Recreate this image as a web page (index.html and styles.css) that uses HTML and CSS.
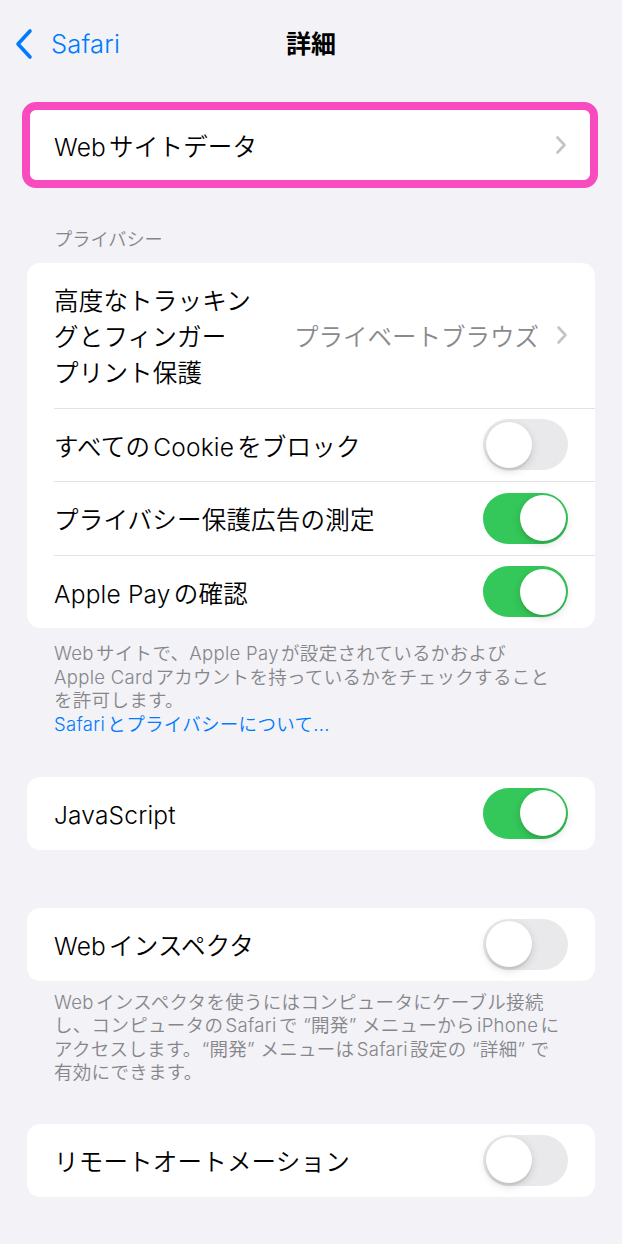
FILE: index.html
```html
<!DOCTYPE html>
<html lang="ja">
<head>
<meta charset="utf-8">
<title>詳細</title>
<link rel="stylesheet" href="styles.css">
</head>
<body>
<div class="screen">
  <header class="nav">
    <div class="nav-left">
      <svg class="back-icon" viewBox="0 0 20 32" width="20" height="32" aria-hidden="true"><path d="M16 3 L4 16 L16 29" fill="none" stroke="#007aff" stroke-width="3.6" stroke-linecap="round" stroke-linejoin="round"/></svg>
      <span class="back-label">Safari</span>
    </div>
    <div class="nav-title">詳細</div>
    <div class="nav-right"></div>
  </header>

  <div class="highlight">
    <div class="highlight-row">
      <span class="label">Webサイトデータ</span>
      <svg class="chev" viewBox="0 0 12 20" width="12" height="20" aria-hidden="true"><path d="M2.5 2.5 L9.5 10 L2.5 17.5" fill="none" stroke="#c4c4c7" stroke-width="2.6" stroke-linecap="round" stroke-linejoin="round"/></svg>
    </div>
  </div>

  <div class="section-header">プライバシー</div>
  <div class="card">
    <div class="row">
      <div class="row-body">
        <span class="label label-multi">高度なトラッキン<br>グとフィンガー<br>プリント保護</span>
        <span class="value">プライベートブラウズ</span>
        <svg class="chev" viewBox="0 0 12 20" width="12" height="20" aria-hidden="true"><path d="M2.5 2.5 L9.5 10 L2.5 17.5" fill="none" stroke="#c4c4c7" stroke-width="2.6" stroke-linecap="round" stroke-linejoin="round"/></svg>
      </div>
    </div>
    <div class="row">
      <div class="row-body">
        <span class="label">すべてのCookieをブロック</span>
        <span class="toggle"><span class="knob"></span></span>
      </div>
    </div>
    <div class="row">
      <div class="row-body">
        <span class="label">プライバシー保護広告の測定</span>
        <span class="toggle on"><span class="knob"></span></span>
      </div>
    </div>
    <div class="row">
      <div class="row-body">
        <span class="label">Apple Payの確認</span>
        <span class="toggle on"><span class="knob"></span></span>
      </div>
    </div>
  </div>
  <div class="footer footer-privacy">Webサイトで、Apple Payが設定されているかおよび<br>Apple Cardアカウントを持っているかをチェックすること<br>を許可します。<br><a class="link" href="#">Safariとプライバシーについて...</a></div>

  <div class="card card-js">
    <div class="row">
      <div class="row-body">
        <span class="label">JavaScript</span>
        <span class="toggle on"><span class="knob"></span></span>
      </div>
    </div>
  </div>

  <div class="card card-inspector">
    <div class="row">
      <div class="row-body">
        <span class="label">Webインスペクタ</span>
        <span class="toggle"><span class="knob"></span></span>
      </div>
    </div>
  </div>
  <div class="footer footer-inspector">Webインスペクタを使うにはコンピュータにケーブル接続<br>し、コンピュータのSafariで “開発” メニューからiPhoneに<br>アクセスします。“開発” メニューはSafari設定の “詳細” で<br>有効にできます。</div>

  <div class="card card-remote">
    <div class="row">
      <div class="row-body">
        <span class="label">リモートオートメーション</span>
        <span class="toggle"><span class="knob"></span></span>
      </div>
    </div>
  </div>
</div>
</body>
</html>
```
FILE: styles.css
```css
* { box-sizing: border-box; }
html, body {
  margin: 0;
  padding: 0;
  background: #f2f2f7;
}
body {
  font-family: Inter, "Noto Sans CJK JP", sans-serif;
  color: #000;
  width: 622px;
  min-height: 1244px;
  text-autospace: normal;
}
.screen {
  display: flex;
  flex-direction: column;
}

/* nav */
.nav {
  height: 88px;
  display: grid;
  grid-template-columns: 1fr auto 1fr;
  align-items: center;
}
.nav-left {
  display: flex;
  align-items: center;
  padding-left: 14px;
  gap: 17px;
  color: #007aff;
}
.back-icon { display: block; }
.back-label {
  font-size: 25.5px;
  line-height: 32px;
  letter-spacing: 0.2px;
  font-weight: 350;
}
.nav-title {
  font-size: 25px;
  font-weight: 700;
  line-height: 32px;
}

/* highlighted row */
.highlight {
  margin: 14px 24px 0 22px;
  border: 8px solid #f74bbf;
  border-radius: 14px;
  background: #fff;
}
.highlight-row {
  display: flex;
  align-items: center;
  height: 70px;
  padding: 0 23px 0 24px;
}
.highlight-row .label { flex: 1; }

.label {
  font-size: 24.5px;
  line-height: 32px;
  padding-top: 4px;
  white-space: nowrap;
  font-weight: 350;
  letter-spacing: 0.2px;
}
.chev { display: block; flex: none; }

/* section header */
.section-header {
  margin: 40px 0 12px;
  padding-left: 54px;
  font-size: 18.2px;
  line-height: 23px;
  color: #86868a;
  font-weight: 350;
}

/* cards */
.card {
  margin: 0 27px;
  background: #fff;
  border-radius: 13px;
  overflow: hidden;
}
.row {
  padding-left: 27px;
}
.row-body {
  display: flex;
  align-items: center;
  padding: 18.25px 27px 18.25px 0;
}
.row + .row .row-body {
  border-top: 1px solid #e2e2e5;
}
.row-body .label { flex: 1; }
.label-multi {
  flex: none !important;
  line-height: 36px;
  padding-top: 2px;
  margin-bottom: -2px;
}
.value {
  margin-left: auto;
  margin-right: 17px;
  padding-top: 4px;
  font-size: 24.5px;
  line-height: 32px;
  color: #8a8a8e;
  white-space: nowrap;
  font-weight: 350;
}

/* toggle */
.toggle {
  flex: none;
  position: relative;
  width: 85px;
  height: 51px;
  border-radius: 26px;
  background: #e9e9eb;
  margin: -7.5px 0;
}
.toggle.on { background: #34c759; }
.knob {
  position: absolute;
  top: 2.5px;
  left: 2.5px;
  width: 46px;
  height: 46px;
  border-radius: 50%;
  background: #fff;
  box-shadow: 0 3px 8px rgba(0, 0, 0, 0.15), 0 3px 1px rgba(0, 0, 0, 0.06);
}
.toggle.on .knob { left: 36.5px; }

/* footers */
.footer {
  padding: 0 4px 0 54px;
  font-size: 18.5px;
  line-height: 23.5px;
  color: #86868a;
  white-space: nowrap;
  font-weight: 350;
  letter-spacing: 0.3px;
}
.footer-privacy { padding-top: 14px; }
.footer-inspector { padding-top: 10px; }
.link {
  color: #007aff;
  text-decoration: none;
}
.card-js { margin-top: 41px; }
.card-inspector { margin-top: 58.5px; }
.card-remote { margin-top: 39.5px; }
```
